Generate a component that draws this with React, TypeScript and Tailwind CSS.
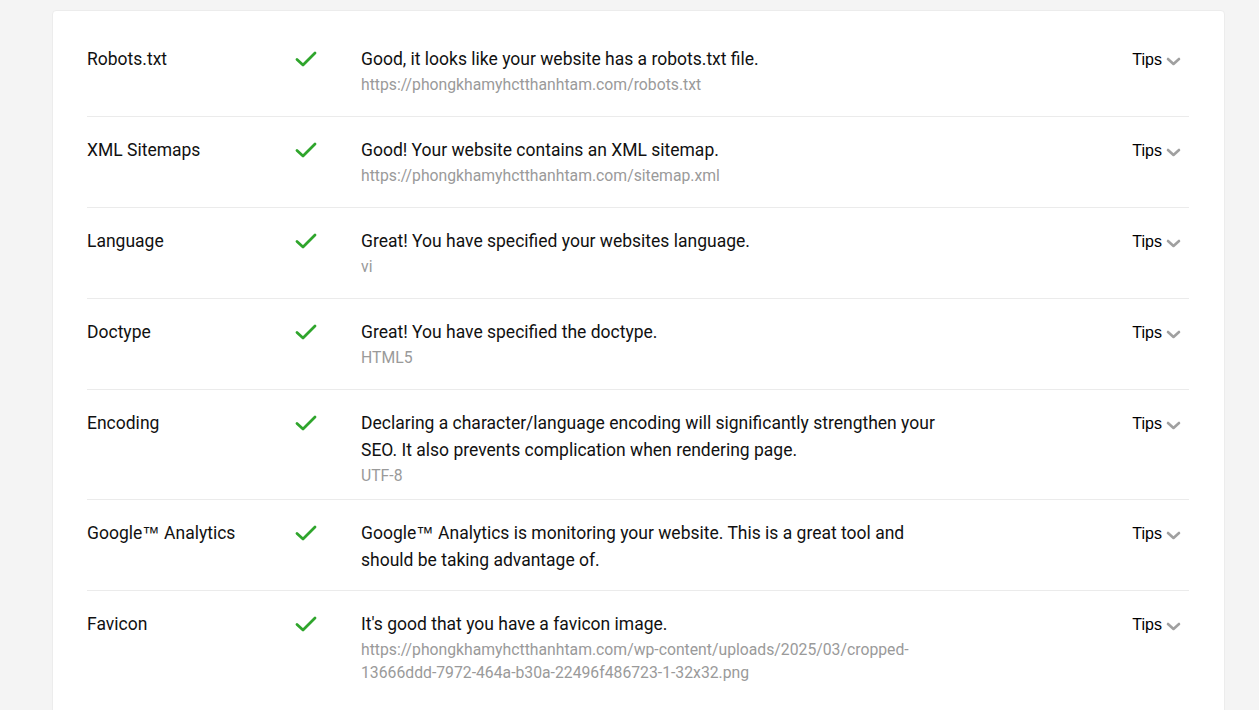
import type { ReactNode } from 'react';

const tm = <span className="font-['Liberation_Sans',Arial,sans-serif]">™</span>;

const rows: { title: ReactNode; text: ReactNode; sub?: string }[] = [
  { title: 'Robots.txt', text: 'Good, it looks like your website has a robots.txt file.', sub: 'https://phongkhamyhctthanhtam.com/robots.txt' },
  { title: 'XML Sitemaps', text: 'Good! Your website contains an XML sitemap.', sub: 'https://phongkhamyhctthanhtam.com/sitemap.xml' },
  { title: 'Language', text: 'Great! You have specified your websites language.', sub: 'vi' },
  { title: 'Doctype', text: 'Great! You have specified the doctype.', sub: 'HTML5' },
  {
    title: 'Encoding',
    text: 'Declaring a character/language encoding will significantly strengthen your SEO. It also prevents complication when rendering page.',
    sub: 'UTF-8',
  },
  {
    title: <>Google{tm} Analytics</>,
    text: <>Google{tm} Analytics is monitoring your website. This is a great tool and should be taking advantage of.</>,
  },
  {
    title: 'Favicon',
    text: "It's good that you have a favicon image.",
    sub: 'https://phongkhamyhctthanhtam.com/wp-content/uploads/2025/03/cropped-13666ddd-7972-464a-b30a-22496f486723-1-32x32.png',
  },
];

function Check() {
  return (
    <svg width="22" height="16" viewBox="0 0 22 16" className="mt-[5px]">
      <path d="M2 8.5 L8 14 L20 2" fill="none" stroke="#2fa52c" strokeWidth="2.8" strokeLinecap="round" strokeLinejoin="round" />
    </svg>
  );
}

function Chevron() {
  return (
    <svg width="15" height="9" viewBox="0 0 15 9" className="ml-[4px] mt-[11px]">
      <path d="M2 2 L7.5 7 L13 2" fill="none" stroke="#a0a0a0" strokeWidth="2.6" strokeLinecap="round" strokeLinejoin="round" />
    </svg>
  );
}

export default function App() {
  return (
    <div className="min-h-[710px] overflow-hidden bg-[#f4f4f4] pl-[52px] pr-[34px] pt-[10px] font-['Roboto',sans-serif]">
      <div className="rounded-[4px] border border-[#ececec] bg-white pl-[34px] pr-[35px] pt-[15px] pb-[40px]">
        {rows.map((r, i) => (
          <div
            key={i}
            className={`flex min-h-[91px] pt-[20px] pb-[12px] ${i < rows.length - 1 ? 'border-b border-[#ebebeb]' : ''}`}
          >
            <div className="w-[208px] shrink-0 text-[17.5px] leading-[27px] text-[#111]">{r.title}</div>
            <div className="w-[66px] shrink-0">
              <Check />
            </div>
            <div className="w-[580px] shrink-0">
              <p className="text-[17.5px] leading-[27px] text-[#111]">{r.text}</p>
              {r.sub && <p className="text-[15.75px] leading-[23px] text-[#9a9a9a]">{r.sub}</p>}
            </div>
            <div className="ml-auto mr-[8px] flex items-start font-['Liberation_Sans',Arial,sans-serif] text-[16px] leading-[27px] text-black">
              Tips
              <Chevron />
            </div>
          </div>
        ))}
      </div>
    </div>
  );
}
